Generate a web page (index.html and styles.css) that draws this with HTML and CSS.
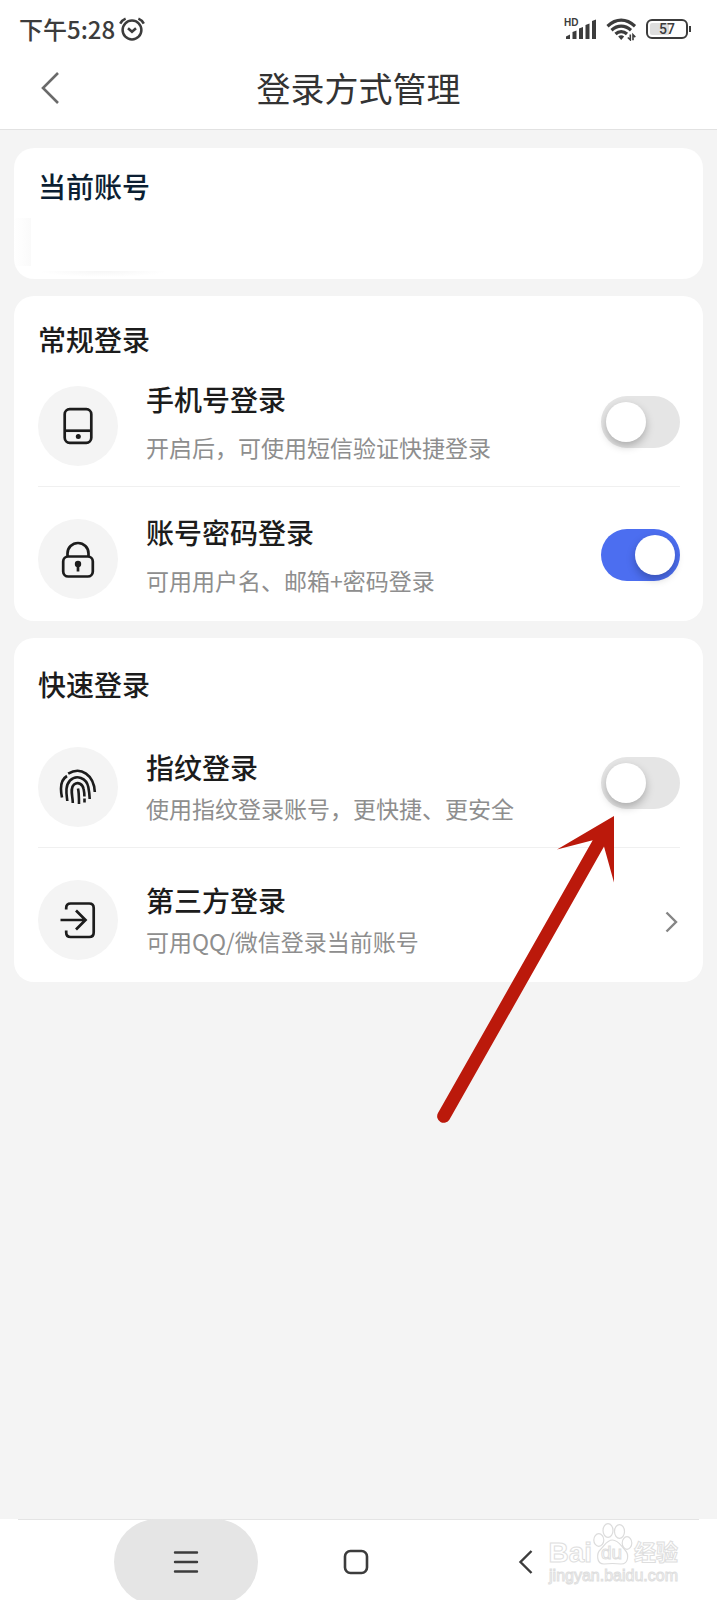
FILE: index.html
```html
<!DOCTYPE html>
<html lang="zh-CN">
<head>
<meta charset="utf-8">
<meta name="viewport" content="width=device-width, initial-scale=1">
<title>登录方式管理</title>
<link rel="stylesheet" href="styles.css">
</head>
<body>
<div class="status">
  <span class="time">下午5:28</span>
  <svg class="alarm" width="26" height="24" viewBox="0 0 26 24" fill="none" stroke="#3c3c3c" stroke-width="2.500">
    <circle cx="13" cy="13" r="9.400"/>
    <path d="M9 11.200l4 3.600 4-3.600M1.200 6.600Q3 3 6.600 1.600M24.800 6.600Q23 3 19.400 1.600"/>
  </svg>
  <div class="indicators">
    <div class="signal">
      <span class="hd">HD</span>
      <svg width="32" height="22" viewBox="0 0 32 22" fill="#3c3c3c">
        <path d="M1 21v-2.500l4-2V21zM7.500 21v-7l4-1.500V21zM14 21V10.500L18 9v12zM20.500 21V7l4-1.500V21zM27 21V3l4-1.500V21z"/>
      </svg>
    </div>
    <svg class="wifi" width="31" height="24" viewBox="0 0 31 24" fill="none" stroke="#3c3c3c">
      <path stroke-width="3.200" d="M1.500 9.200Q8 3.200 15.200 3.200T29 9.200M5.500 13.200Q10 9.200 15.200 9.200T25 13.200M9.500 17Q12 14.700 15.200 14.700T21 17"/>
      <path fill="#3c3c3c" stroke="none" d="M12.200 19.500q3-2.500 6 0l-3 3.500z"/>
      <path stroke-width="1.600" d="M24.300 17.500v5.300l-2.500-2.300M27 23.300V17.800l2.300 2.300"/>
    </svg>
    <span class="battery"><span class="level">57</span></span>
  </div>
</div>

<header class="header">
  <button class="back" type="button" aria-label="返回">
    <svg width="20" height="34" viewBox="0 0 20 34" fill="none" stroke="#6a6a6a" stroke-width="2.600"><path d="M18 2L3 17l15 15"/></svg>
  </button>
  <h1 class="title">登录方式管理</h1>
</header>

<main class="content">
  <section class="card account">
    <h2 class="card-title">当前账号</h2>
  </section>

  <section class="card regular">
    <h2 class="card-title">常规登录</h2>
    <div class="row">
      <span class="icon">
        <svg width="40" height="40" viewBox="0 0 40 40" fill="none" stroke="#1c1c1c" stroke-width="2.700">
          <rect x="6.700" y="3.200" width="26.600" height="33.600" rx="5"/><path d="M7 24.700h27"/><circle cx="20.300" cy="30.600" r="2.500" fill="#1c1c1c" stroke="none"/>
        </svg>
      </span>
      <label class="text" for="phone"><span class="name">手机号登录</span><span class="desc">开启后，可使用短信验证快捷登录</span></label>
      <input class="switch" id="phone" type="checkbox" role="switch">
    </div>
    <div class="row">
      <span class="icon">
        <svg width="40" height="40" viewBox="0 0 40 40" fill="none" stroke="#1c1c1c" stroke-width="2.700">
          <rect x="5.200" y="17.500" width="29.600" height="20" rx="5"/><path d="M9.500 17v-2.500a10.500 10.500 0 0 1 21 0V17"/><circle cx="20" cy="25" r="3.200" fill="#1c1c1c" stroke="none"/><path d="M20 25v7.500"/>
        </svg>
      </span>
      <label class="text" for="password"><span class="name">账号密码登录</span><span class="desc">可用用户名、邮箱+密码登录</span></label>
      <input class="switch" id="password" type="checkbox" role="switch" checked>
    </div>
  </section>

  <section class="card quick">
    <h2 class="card-title">快速登录</h2>
    <div class="row">
      <span class="icon">
        <svg width="40" height="40" viewBox="0 0 40 40" fill="none" stroke="#1c1c1c" stroke-width="2.600">
          <path d="M4 30.500C2 21 2 13 9 9M10.200 6.700C23-1 36 8 36.800 25"/>
          <path d="M9.300 34C8.800 28 6.500 19.500 12 13.500 18.500 7 28.500 11 30.300 20q1.200 6 1.400 12"/>
          <path d="M14.800 36C14.800 29 11.500 21.500 16 17.500 20 14.500 24.800 17 25.600 22q.8 3.500.8 7.500M26.500 31.500v4"/>
          <path d="M20 21.500c1 4 1 9.500 1 15.500"/>
        </svg>
      </span>
      <label class="text" for="finger"><span class="name">指纹登录</span><span class="desc">使用指纹登录账号，更快捷、更安全</span></label>
      <input class="switch" id="finger" type="checkbox" role="switch">
    </div>
    <a class="row" href="#third-party">
      <span class="icon">
        <svg width="40" height="40" viewBox="0 0 40 40" fill="none" stroke="#1c1c1c" stroke-width="2.700">
          <path d="M8.200 9.500V8q0-4.500 4.500-4.500h18.500q4.500 0 4.500 4.500v24.500q0 4.500-4.500 4.500H12.700q-4.500 0-4.500-4.500v-2M2.500 20h24.500M18 10.500l9.500 9.500-9.500 9.500"/>
        </svg>
      </span>
      <span class="text"><span class="name">第三方登录</span><span class="desc">可用QQ/微信登录当前账号</span></span>
      <svg class="chevron" width="14" height="22" viewBox="0 0 14 22" fill="none" stroke="#858585" stroke-width="2.400"><path d="M2.500 1.500l9.500 9.500-9.500 9.500"/></svg>
    </a>
    <svg class="arrow" width="188" height="320" viewBox="0 0 188 320" fill="#bb190b">
      <path d="M182 6L125 39.500 160.700 30.300 6 303a6.500 6.500 0 0 0 11.500 6.500L172 36.500 182 72.500z"/>
    </svg>
  </section>
</main>

<nav class="nav">
  <button class="key active" type="button" aria-label="菜单">
    <svg width="26" height="26" viewBox="0 0 26 26" fill="none" stroke="#3c3c3c" stroke-width="2.400" stroke-linecap="round"><path d="M2 3.500h22M2 13h22M2 22.500h22"/></svg>
  </button>
  <button class="key" type="button" aria-label="主页">
    <svg width="26" height="26" viewBox="0 0 26 26" fill="none" stroke="#3c3c3c" stroke-width="2.600"><rect x="2" y="2" width="22" height="22" rx="5.500"/></svg>
  </button>
  <button class="key" type="button" aria-label="返回上一页">
    <svg width="26" height="26" viewBox="0 0 26 26" fill="none" stroke="#3c3c3c" stroke-width="2.400"><path d="M18.500 2L7.500 13l11 11"/></svg>
  </button>
  <div class="watermark">
    <div class="brand">
      <span class="bai">Bai</span>
      <span class="paw">
        <svg width="40" height="44" viewBox="0 0 40 44" fill="#fff" stroke="#dcdcdc" stroke-width="1.200">
          <ellipse cx="5.800" cy="18" rx="5" ry="6.300"/><ellipse cx="15" cy="8.500" rx="5" ry="6.800"/><ellipse cx="26.500" cy="9.500" rx="5" ry="6.800"/><ellipse cx="34" cy="21" rx="4.800" ry="6.300"/>
          <path d="M19.500 18c-6 0-8 6-12 9.500S3 42 11 42q8.500-1 17 0c8 0 8-10 4-14S25.500 18 19.500 18z"/>
        </svg>
        <span class="du">du</span>
      </span>
      <span class="jy">经验</span>
    </div>
    <div class="url">jingyan.baidu.com</div>
  </div>
</nav>
</body>
</html>
```
FILE: styles.css
```css
* { box-sizing: border-box; }

body {
  margin: 0;
  min-height: 100vh;
  display: flex;
  flex-direction: column;
  background: #f4f4f4;
  color: #1c1c1c;
  font-family: "Noto Sans CJK SC", "Noto Sans", sans-serif;
}

button { border: 0; padding: 0; background: none; cursor: pointer; }
svg { display: block; flex: none; }

.status {
  display: flex;
  align-items: center;
  height: 56px;
  padding: 2px 25px 0 19px;
  background: #fff;
  color: #3c3c3c;
}
.time { font-size: 24px; font-weight: 500; line-height: 32px; }
.alarm { margin-left: 4px; }
.indicators { display: flex; align-items: center; gap: 9px; margin-left: auto; }
.signal { position: relative; }
.hd {
  position: absolute;
  left: -1px;
  top: 0;
  font: bold 10px/10px "Liberation Sans", sans-serif;
}
.battery {
  position: relative;
  width: 42px;
  height: 20px;
  margin-right: 4px;
  padding: 2px;
  border: 2px solid #3c3c3c;
  border-radius: 6px;
}
.battery::after {
  content: "";
  position: absolute;
  right: -5px;
  top: 5px;
  width: 2px;
  height: 6px;
  background: #3c3c3c;
}
.level {
  display: block;
  border-radius: 2px;
  background: linear-gradient(90deg, #dedede 57%, #fff 57%);
  font: 500 14px/12px Roboto, sans-serif;
  text-align: center;
}

.header {
  display: grid;
  grid-template-columns: 60px 1fr 60px;
  align-items: center;
  height: 74px;
  padding-bottom: 9px;
  border-bottom: 1px solid #e2e2e2;
  background: #fff;
}
.back { justify-self: end; }
.title {
  margin: 0;
  color: #333;
  font-size: 34px;
  font-weight: 400;
  line-height: 44px;
  text-align: center;
}

.content {
  flex: 1;
  display: flex;
  flex-direction: column;
  gap: 17px;
  padding: 18px 14px;
}
.card {
  position: relative;
  padding: 23px 23px 22px 24px;
  border-radius: 20px;
  background: #fff;
}
.card-title {
  margin: 0;
  font-size: 28px;
  font-weight: 500;
  line-height: 40px;
}
.account {
  min-height: 131px;
  padding-top: 18px;
  background:
    linear-gradient(90deg, #fff, #fafafa) 0 70px / 17px 48px no-repeat,
    radial-gradient(ellipse at top, #f6f6f6, #fff 70%) 24px 123px / 130px 6px no-repeat,
    #fff;
}
.account .card-title { color: #0c1f33; }
.regular .card-title { margin-bottom: 27px; }
.quick { padding-top: 26px; }
.quick .card-title { margin-bottom: 43px; }

.row {
  display: flex;
  align-items: center;
  gap: 28px;
  color: inherit;
  text-decoration: none;
}
.row + .row {
  margin-top: 20px;
  padding-top: 32px;
  border-top: 1px solid #f0f0f0;
}
.icon {
  flex: none;
  display: grid;
  place-items: center;
  width: 80px;
  height: 80px;
  border-radius: 50%;
  background: #f4f4f4;
}
.text { flex: 1; display: flex; flex-direction: column; gap: 14px; }
.regular .text { align-self: flex-start; gap: 22px; }
.name { font-size: 28px; font-weight: 500; line-height: 28px; }
.regular .name { line-height: 26px; }
.desc { color: #8e8e8e; font-size: 23px; line-height: 26px; }

.switch {
  appearance: none;
  flex: none;
  width: 79px;
  height: 52px;
  margin: 0 0 8px;
  padding: 6px 5px;
  border-radius: 26px;
  background: #e5e5e5;
  cursor: pointer;
}
.switch::before {
  content: "";
  display: block;
  width: 40px;
  height: 40px;
  border-radius: 50%;
  background: #fff;
  box-shadow: 0 4px 8px rgba(0, 0, 0, .25);
}
.switch:checked { background: #4c6ef0; }
.switch:checked::before { margin-left: auto; }
.chevron { margin: 4px 2px 0 0; }

.arrow {
  position: absolute;
  top: 172px;
  right: 83px;
  pointer-events: none;
}

.nav {
  position: relative;
  display: flex;
  justify-content: center;
  gap: 26px;
  height: 81px;
  padding-right: 5px;
  overflow: hidden;
  background: linear-gradient(#e4e4e4, #e4e4e4) 50% 0 / calc(100% - 36px) 1px no-repeat #fff;
}
.key {
  flex: none;
  display: grid;
  place-items: center;
  width: 144px;
  height: 86px;
  border-radius: 43px;
}
.active { background: #e5e5e5; }

.watermark {
  position: absolute;
  right: 39px;
  top: 4px;
  color: #fff;
  -webkit-text-stroke: 1px #dedede;
  font-family: "Liberation Sans", "Noto Sans CJK SC", sans-serif;
}
.brand { display: flex; align-items: flex-end; gap: 1px; height: 43px; }
.bai { font-size: 28px; font-weight: 700; line-height: 26px; }
.paw { position: relative; }
.du {
  position: absolute;
  left: 8px;
  top: 20px;
  font-size: 19px;
  line-height: 22px;
}
.jy { font-size: 22px; font-weight: 700; line-height: 26px; }
.url { font-size: 16px; line-height: 20px; text-align: right; }
```
